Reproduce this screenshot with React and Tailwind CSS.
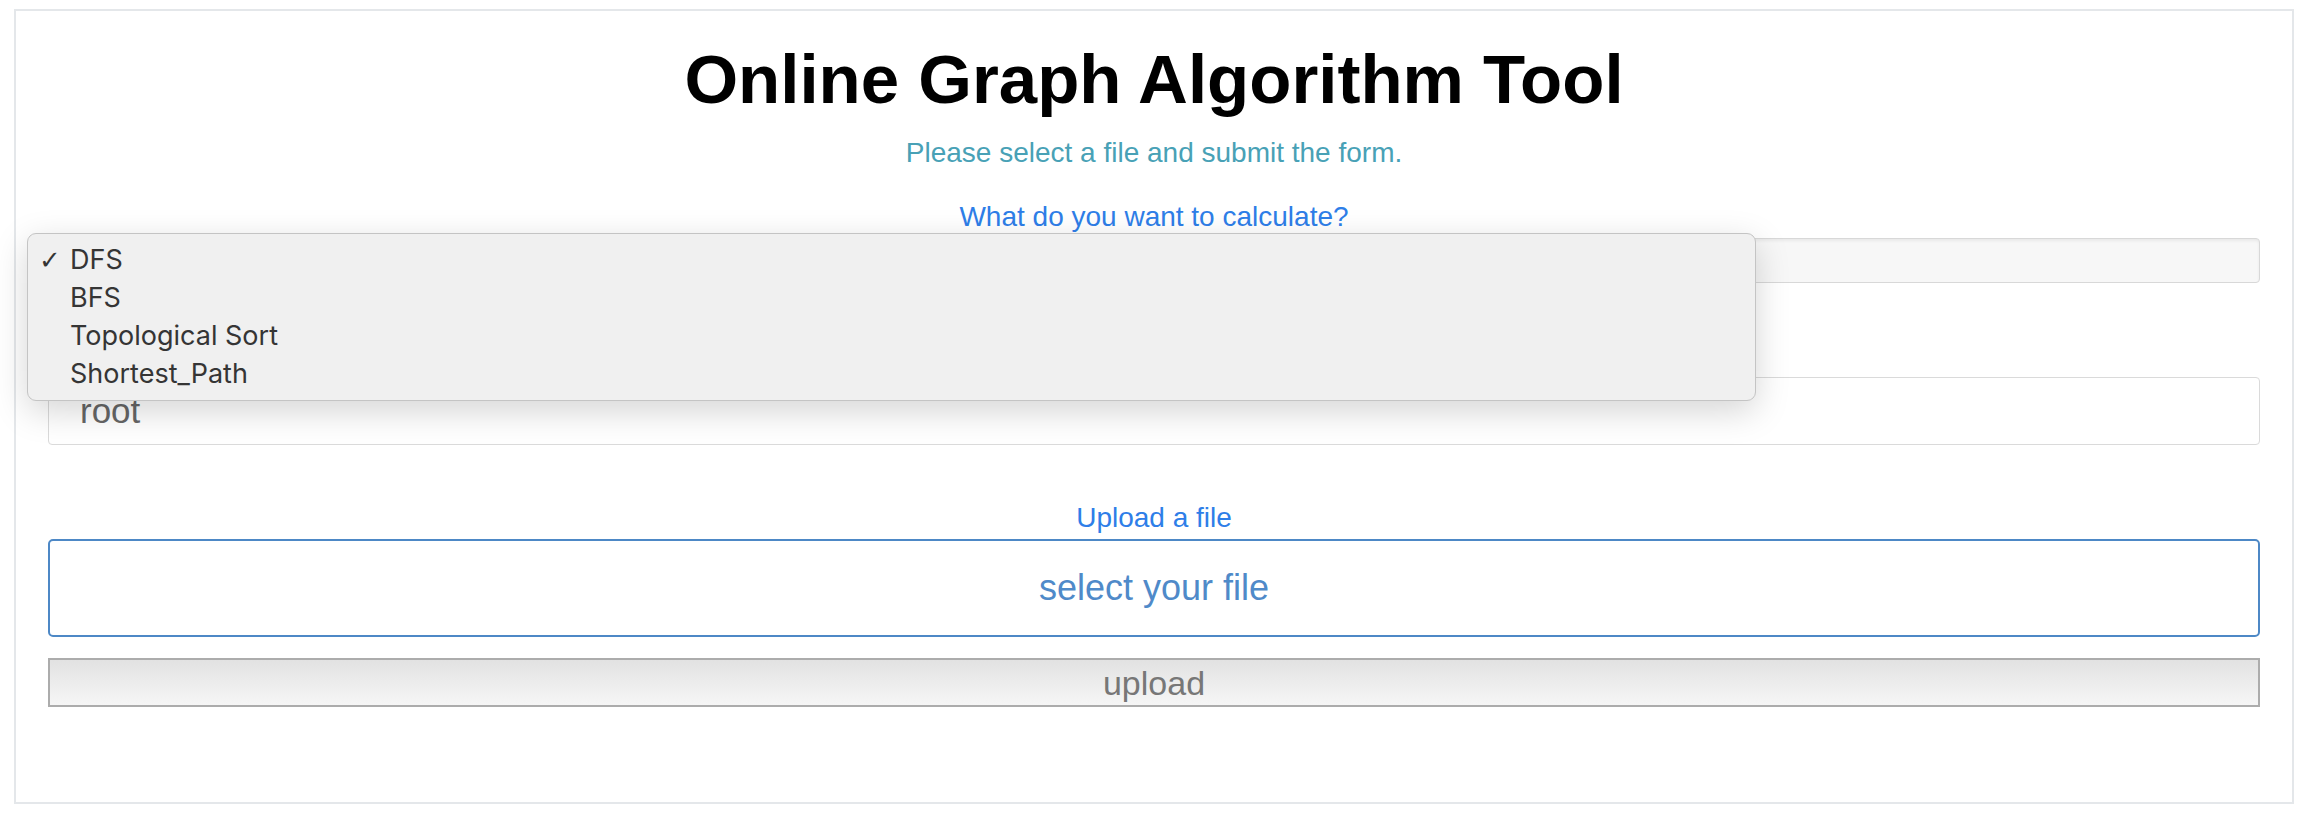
import { useState } from 'react';

const options = ['DFS', 'BFS', 'Topological Sort', 'Shortest_Path'];

function App() {
  const [selected] = useState('DFS');

  return (
    <div className="min-h-[820px] bg-white pt-[9px] pl-[14px] font-['Liberation_Sans',Arial,sans-serif]">
      <div className="w-[2280px] h-[795px] border-2 border-[#e4e7ea] px-[32px] flex flex-col">
        <h1 className="mt-[27px] text-center text-[69px] leading-[84px] font-bold text-black">
          Online Graph Algorithm Tool
        </h1>
        <p className="mt-[10px] text-center text-[28px] leading-[42px] text-[#48a1b6]">
          Please select a file and submit the form.
        </p>

        <form className="flex flex-col" onSubmit={(e) => e.preventDefault()}>
          <label className="mt-[22px] text-center text-[28px] leading-[42px] text-[#2e7ee8]">
            What do you want to calculate?
          </label>
          <div className="relative">
            <div className="h-[45px] rounded-[4px] border border-[#d8d8d8] bg-[#f7f7f7] shadow-[inset_0_2px_3px_rgba(0,0,0,0.06)]"></div>

            {/* open native menu */}
            <div className="absolute left-[-21px] top-[-5px] z-10 w-[1729px] h-[168px] rounded-[9px] border border-[#c4c4c4] bg-[#f0f0f0] pt-[7px] shadow-[0_10px_34px_rgba(0,0,0,0.17)] font-['Inter',sans-serif]">
              {options.map((opt) => (
                <div key={opt} className="flex items-center h-[38px] text-[27px] text-[#353535]">
                  <span className="w-[42px] pl-[11px] text-[26px] leading-none text-[#353535] font-['DejaVu_Sans',sans-serif]">
                    {opt === selected ? '✓' : ''}
                  </span>
                  <span>{opt}</span>
                </div>
              ))}
            </div>
          </div>

          <label className="mt-[29px] text-center text-[28px] leading-[42px] text-[#2e7ee8]">
            Enter the start node
          </label>
          <input
            type="text"
            defaultValue="root"
            className="mt-[23px] h-[68px] rounded-[4px] border border-[#dadada] bg-white px-[31px] text-[35px] text-[#666] outline-none"
          />

          <label className="mt-[52px] text-center text-[28px] leading-[42px] text-[#2e7ee8]">
            Upload a file
          </label>
          <div className="h-[98px] rounded-[5px] border-2 border-[#4d88c6] flex items-center justify-center text-[36px] text-[#4f8ac9]">
            select your file
          </div>
          <button
            type="submit"
            className="mt-[21px] h-[49px] border-2 border-[#acacac] bg-gradient-to-b from-[#e2e2e2] to-[#f6f6f6] text-[34px] leading-none text-[#777]"
          >
            upload
          </button>
        </form>
      </div>
    </div>
  );
}

export default App;
